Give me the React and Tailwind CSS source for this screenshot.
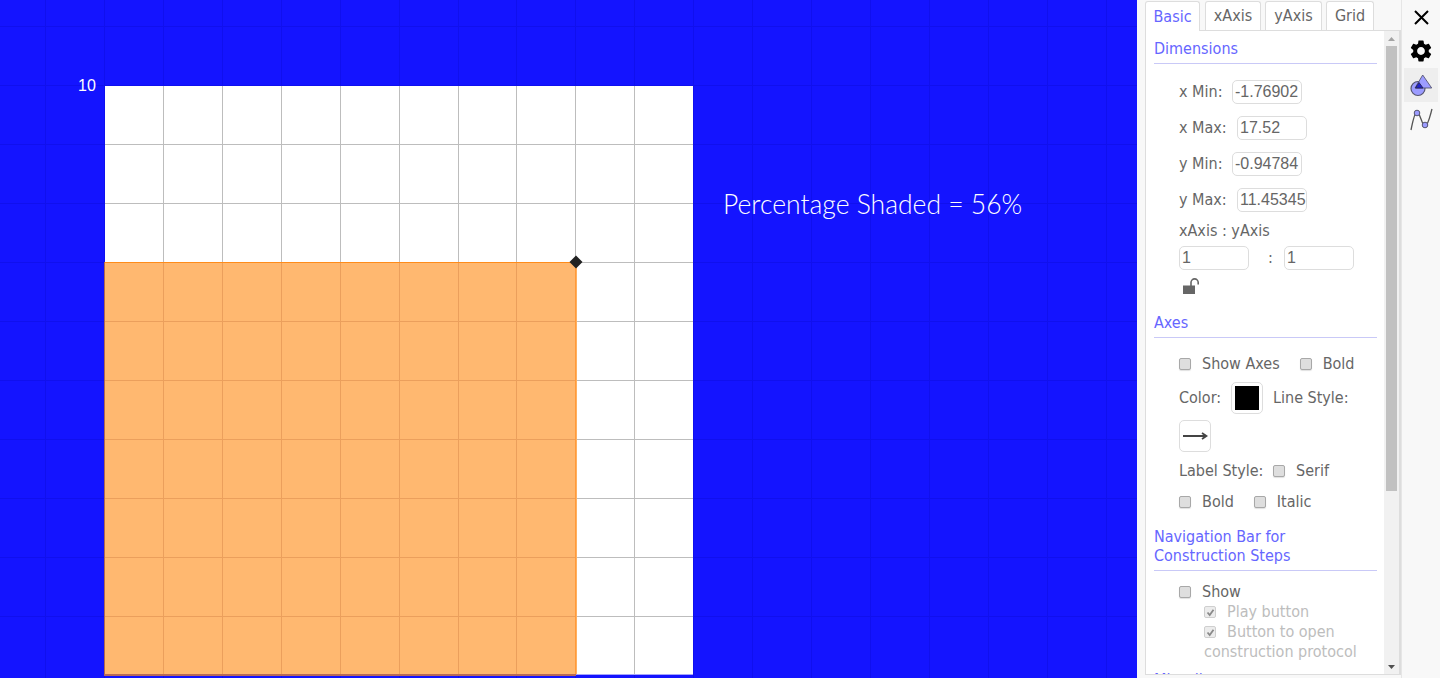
import { MdSettings } from 'react-icons/md';

const BLUE_LINE = '#1010ee';
const xs = [163, 222, 281, 340, 399, 458, 516, 575, 634];
const ys = [144, 203, 262, 321, 380, 439, 498, 557, 616];
const outerXs = [45, 752, 811, 870, 929, 988, 1047, 1106];
const outerYs = [26, 85, 144, 203, 262, 321, 380, 439, 498, 557, 616];

function Board() {
  return (
    <svg width="1137" height="678" className="absolute inset-0" shapeRendering="crispEdges">
      {outerYs.map((y) => <rect key={y} x="0" y={y} width="1137" height="1" fill={BLUE_LINE} />)}
      {outerXs.concat(xs, [104, 693]).map((x) => <rect key={x} x={x} y="0" width="1" height="678" fill={BLUE_LINE} />)}
      <rect x="105" y="86" width="588" height="588" fill="#ffffff" />
      {xs.map((x) => <rect key={x} x={x} y="86" width="1" height="588" fill="#bdbdbd" />)}
      {ys.map((y) => <rect key={y} x="105" y={y} width="588" height="1" fill="#bdbdbd" />)}
      <rect x="104" y="262" width="472" height="414" fill="#ffb870" />
      {xs.slice(0, 7).map((x) => <rect key={x} x={x} y="262" width="1" height="412" fill="#eb9f5c" />)}
      {ys.slice(3).map((y) => <rect key={y} x="104" y={y} width="472" height="1" fill="#eb9f5c" />)}
      <rect x="104" y="262" width="472" height="1" fill="#ff8c1a" />
      <rect x="575" y="262" width="1" height="412" fill="#ff9a3a" />
      <rect x="576" y="262" width="1" height="412" fill="#ffb060" />
      <rect x="104" y="262" width="1" height="414" fill="#b0684f" />
      <rect x="104" y="674" width="472" height="2" fill="#b86a58" />
      <rect x="576" y="674" width="117" height="1" fill="#a4a4fb" />
    </svg>
  );
}

function Check({ checked, disabled }) {
  return (
    <span className={`flex h-3 w-3 shrink-0 items-center justify-center rounded-[2px] border ${disabled ? 'border-[#cfcfcf] bg-[#ececec]' : 'border-[#a8a8a8] bg-[#dedede] shadow-[0_1px_1px_#e0e0e0]'}`}>
      {checked && (
        <svg width="9" height="9" viewBox="0 0 9 9">
          <path d="M1.5 4.5 L3.7 7 L7.5 1.8" fill="none" stroke="#8a8a8a" strokeWidth="1.8" />
        </svg>
      )}
    </span>
  );
}

function Heading({ children, className = '' }) {
  return (
    <h3 className={`mr-[7px] border-b border-[#c9c9f7] pb-[5px] text-[16px] leading-[19px] font-normal text-[#6666ff] ${className}`}>
      {children}
    </h3>
  );
}

function NumberField({ value, className = '' }) {
  return (
    <input
      readOnly
      value={value}
      className={`h-6 w-[70px] rounded-[5px] border border-[#dddddd] bg-white pl-[2px] font-['Liberation_Sans',sans-serif] text-[16px] text-[#666666] outline-none ${className}`}
    />
  );
}

function Tab({ label, active, className = '' }) {
  return (
    <button className={`flex h-[29px] items-center justify-center rounded-t-[3px] border border-b-0 border-[#dddddd] bg-white text-[16px] ${active ? 'text-[#6666ff]' : 'text-[#666666]'} ${className}`}>
      {label}
    </button>
  );
}

function CheckRow({ label, checked, disabled, className = '' }) {
  return (
    <div className={`flex h-5 items-center gap-[11px] ${disabled ? 'text-[#bdbdbd]' : ''} ${className}`}>
      <Check checked={checked} disabled={disabled} />
      <span>{label}</span>
    </div>
  );
}

function Settings() {
  return (
    <div className="relative flex w-[256px] flex-col">
      <div className="flex gap-1 pt-[1px]">
        <Tab label="Basic" active className="relative z-10 mr-[1px] -mb-px h-[30px] w-[55px]" />
        <Tab label="xAxis" className="w-[56px]" />
        <Tab label="yAxis" className="w-[57px]" />
        <Tab label="Grid" className="w-[48px]" />
      </div>
      <div className="flex h-[645px] border border-r-2 border-[#dddddd] bg-white">
        <div className="h-full flex-1 overflow-hidden pl-[8px] text-[#666666] text-[16px] leading-5">
          <Heading className="mt-[8px]">Dimensions</Heading>
          <div className="mt-4 flex flex-col gap-3 pl-[25px]">
            <div className="flex h-6 items-center gap-[9px]"><span className="w-[44px]">x Min:</span><NumberField value="-1.76902" /></div>
            <div className="flex h-6 items-center gap-[9px]"><span className="w-[49px]">x Max:</span><NumberField value="17.52" /></div>
            <div className="flex h-6 items-center gap-[9px]"><span className="w-[44px]">y Min:</span><NumberField value="-0.94784" /></div>
            <div className="flex h-6 items-center gap-[9px]"><span className="w-[49px]">y Max:</span><NumberField value="11.45345" /></div>
          </div>
          <div className="mt-[9px] pl-[25px]">xAxis : yAxis</div>
          <div className="mt-[5px] flex items-center pl-[25px]">
            <NumberField value="1" />
            <span className="w-[35px] pl-[8px] text-center">:</span>
            <NumberField value="1" />
          </div>
          <div className="mt-2 h-4 pl-[28px]">
            <svg width="18" height="16" viewBox="0 0 18 16">
              <rect x="1" y="7.5" width="12" height="8.5" fill="#666666" />
              <path d="M9 8 V4.5 a3.6 3.6 0 0 1 7.2 0 V6.5" fill="none" stroke="#666666" strokeWidth="1.6" />
            </svg>
          </div>
          <Heading className="mt-[19px]">Axes</Heading>
          <div className="mt-4 flex gap-5 pl-[25px]">
            <CheckRow label="Show Axes" />
            <CheckRow label="Bold" />
          </div>
          <div className="mt-2 flex items-center pl-[25px]">
            <span className="w-[52px]">Color:</span>
            <span className="flex h-8 w-8 items-center justify-center rounded-[5px] border border-[#dddddd]"><span className="h-6 w-6 bg-black" /></span>
            <span className="ml-[10px]">Line Style:</span>
          </div>
          <div className="mt-[6px] pl-[25px]">
            <span className="flex h-8 w-8 items-center justify-center rounded-[5px] border border-[#dddddd]">
              <svg width="26" height="10" viewBox="0 0 26 10">
                <path d="M1 5 H24 M20 2 L24.5 5 L20 8" fill="none" stroke="#444444" strokeWidth="1.8" />
              </svg>
            </span>
          </div>
          <div className="mt-[9px] flex h-5 items-center pl-[25px]">
            <span className="w-[94px]">Label Style:</span>
            <CheckRow label="Serif" />
          </div>
          <div className="mt-[11px] flex gap-[20px] pl-[25px]">
            <CheckRow label="Bold" />
            <CheckRow label="Italic" />
          </div>
          <Heading className="mt-[15px]">Navigation Bar for<br />Construction Steps</Heading>
          <div className="mt-[11px] pl-[25px]">
            <CheckRow label="Show" />
            <div className="pl-[25px]">
              <CheckRow label="Play button" checked disabled />
              <CheckRow label="Button to open" checked disabled />
              <div className="whitespace-nowrap text-[#bdbdbd]">construction protocol</div>
            </div>
          </div>
          <Heading className="mt-2">Miscellaneous</Heading>
        </div>
        <div className="flex h-full w-[15px] flex-col items-center bg-[#f1f1f1]">
          <svg width="15" height="15" viewBox="0 0 15 15" className="shrink-0"><path d="M4 10 L7.5 6 L11 10 Z" fill="#a3a3a3" /></svg>
          <div className="h-[445px] w-[11px] bg-[#c1c1c1]" />
          <div className="flex-1" />
          <svg width="15" height="15" viewBox="0 0 15 15" className="shrink-0"><path d="M4 6 L7.5 10 L11 6 Z" fill="#505050" /></svg>
        </div>
      </div>
    </div>
  );
}

function SideIcons() {
  return (
    <div className="flex flex-1 flex-col items-start border-l border-[#e6e6e6] pl-[2px]">
      <svg width="20" height="20" viewBox="0 0 20 20" className="mt-[7px] ml-[7px]">
        <path d="M4 4 L17 17 M17 4 L4 17" stroke="#000000" strokeWidth="2" />
      </svg>
      <MdSettings size={26} color="#000000" className="mt-[11px] ml-[4px]" />
      <div className="mt-[4px] flex h-[34px] w-[34px] items-center justify-center bg-[#eeeeee]">
        <svg width="34" height="34" viewBox="0 0 34 34">
          <circle cx="14" cy="20.5" r="7" fill="#9c9cff" stroke="#555570" strokeWidth="1.2" />
          <path d="M18.7 7 L27.7 20 H11 Z" fill="#9c9cff" stroke="#555570" strokeWidth="0.9" />
          <path d="M15 14.5 L11.5 20 H19 Z" fill="#2222cc" stroke="#222255" strokeWidth="0.9" />
        </svg>
      </div>
      <svg width="26" height="26" viewBox="0 0 26 26" className="mt-[4px] ml-[5px]">
        <path d="M2 24 C4 14 6 6 8 6 C11 6 13 20 16 20 C19 20 21 10 23 3" fill="none" stroke="#555555" strokeWidth="1.3" />
        <circle cx="8" cy="7" r="2.8" fill="#9c9cff" stroke="#555570" />
        <circle cx="16" cy="19" r="2.8" fill="#9c9cff" stroke="#555570" />
      </svg>
    </div>
  );
}

export default function App() {
  return (
    <div className="flex h-[678px] w-[1440px] overflow-hidden bg-[#f8f8f8] font-['DejaVu_Sans_Condensed','DejaVu_Sans',sans-serif]">
      <div className="relative h-full w-[1137px] shrink-0 bg-[#1414ff]">
        <Board />
        <span className="absolute top-[76px] left-[78px] font-['Liberation_Sans',sans-serif] text-[16px] leading-[19px] text-white">10</span>
        <span className="absolute top-[188px] left-[723px] whitespace-nowrap font-['Lato',sans-serif] text-[26.5px] leading-[32px] font-light text-white">Percentage Shaded = 56%</span>
        <svg width="14" height="14" viewBox="0 0 14 14" className="absolute top-[255px] left-[569px]">
          <path d="M7 0.5 L13.5 7 L7 13.5 L0.5 7 Z" fill="#222222" />
        </svg>
      </div>
      <div className="w-2 shrink-0" />
      <Settings />
      <SideIcons />
    </div>
  );
}
